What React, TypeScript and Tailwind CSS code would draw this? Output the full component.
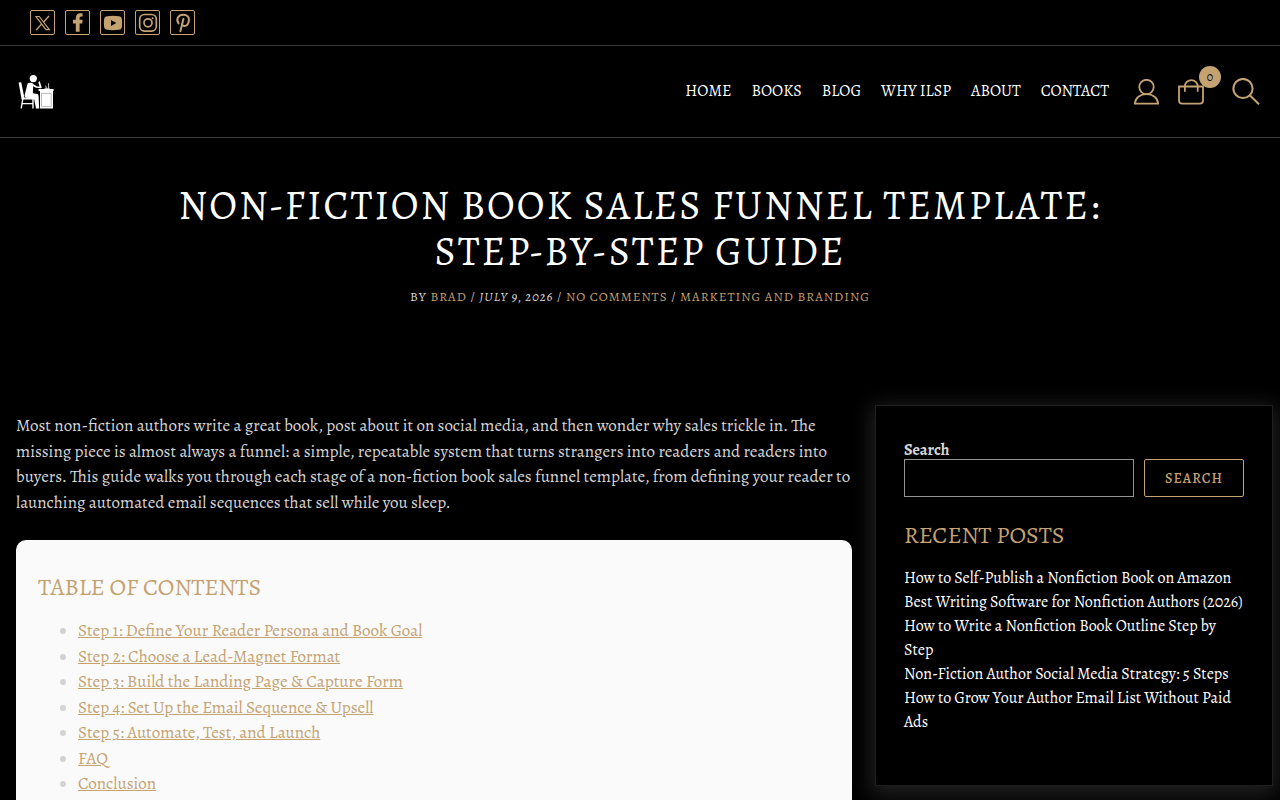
import type { ReactNode } from "react";

const socials: { name: string; icon: ReactNode }[] = [
  {
    name: "X",
    icon: (
      <svg viewBox="0 0 24 24" className="size-6 shrink-0" fill="none" stroke="currentColor">
        <path d="M5 5.500h3.300l10 13.200H15z" strokeWidth="1.200" />
        <path d="M18 5l-5.600 6.300M10.800 12.900L5.200 19" strokeWidth="1.400" />
      </svg>
    ),
  },
  {
    name: "Facebook",
    icon: (
      <svg viewBox="0 0 24 24" className="size-6 shrink-0" fill="currentColor">
        <path d="M9.800 20.800V12.500H7V8.800h2.800V6.900c0-2.900 1.700-4.600 4.300-4.600 1.200 0 2.500.2 2.500.2v3.100h-1.200c-1.300 0-1.800.8-1.800 1.700v1.500h3.100l-.5 3.700h-2.600v8.300z" />
      </svg>
    ),
  },
  {
    name: "YouTube",
    icon: (
      <svg viewBox="0 0 24 24" className="size-6 shrink-0" fill="currentColor">
        <path fillRule="evenodd" d="M6 5.200q6-.7 12 0 2.600.2 2.900 2.800.5 4 0 8-.3 2.600-2.900 2.800-6 .7-12 0-2.600-.2-2.900-2.800-.5-4 0-8Q3.400 5.400 6 5.200zM10 9v6l5.400-3z" />
      </svg>
    ),
  },
  {
    name: "Instagram",
    icon: (
      <svg viewBox="0 0 24 24" className="size-6 shrink-0" fill="none" stroke="currentColor" strokeWidth="1.700">
        <rect x="3.700" y="3.500" width="16.600" height="16.600" rx="4.800" />
        <circle cx="12" cy="11.800" r="4" />
        <circle cx="16.600" cy="7.200" r="1" fill="currentColor" stroke="none" />
      </svg>
    ),
  },
  {
    name: "Pinterest",
    icon: (
      <svg viewBox="0 0 24 24" className="size-6 shrink-0" fill="none" stroke="currentColor" strokeWidth="2" strokeLinecap="round">
        <path d="M7.600 12.400C4.600 8.400 7.200 3.700 12.200 3.700c4 0 6.200 2.500 5.700 5.900-.5 3.600-2.500 5.500-4.700 5.400-1.400-.1-2.100-.9-2.200-1.800M12.400 8L9.400 20.200" />
      </svg>
    ),
  },
];

const navItems = ["Home", "Books", "Blog", "Why ILSP", "About", "Contact"];

const contents = [
  "Step 1: Define Your Reader Persona and Book Goal",
  "Step 2: Choose a Lead-Magnet Format",
  "Step 3: Build the Landing Page & Capture Form",
  "Step 4: Set Up the Email Sequence & Upsell",
  "Step 5: Automate, Test, and Launch",
  "FAQ",
  "Conclusion",
];

const posts = [
  "How to Self-Publish a Nonfiction Book on Amazon",
  "Best Writing Software for Nonfiction Authors (2026)",
  "How to Write a Nonfiction Book Outline Step by Step",
  "Non-Fiction Author Social Media Strategy: 5 Steps",
  "How to Grow Your Author Email List Without Paid Ads",
];

function Logo() {
  return (
    <svg viewBox="0 0 36 34" className="h-[34px] w-9" fill="none" stroke="#fff" strokeLinecap="round" strokeLinejoin="round">
      <circle cx="15.3" cy="3.6" r="3.6" fill="#fff" stroke="none" />
      <path d="M0.6 7.6l2.6-.4L6.4 22.4H17v2.200H3.600z" fill="#fff" stroke="none" />
      <path d="M4.800 24L3.200 33.400M15 24v9.400M4.400 28.600h10.400" strokeWidth="1.400" strokeLinecap="butt" />
      <path d="M9.600 8.400c1.800-1.200 4.400-1 5.800.6l-.6 9.200 4.400.8c1 .4 1.400 1.200 1.400 2.200l.6 12.200h-3.200l-2-10.200-7.400-.4c-1.800-.2-2.200-1.800-1.800-3.200z" fill="#fff" stroke="none" />
      <path d="M14 9.400l4.400 2.600 4.400.4-1.600-5.200" strokeWidth="1.700" />
      <path d="M20.600 14h15v2h-15zM22 16h13v17.600H22z" fill="#fff" stroke="none" />
      <path d="M23.800 18.400h9.400v13.200h-9.400z" stroke="#a8a8a8" strokeWidth=".8" />
      <path d="M27 13.400h4.400M30.600 13V8.600M28.400 13l-.6-2" strokeWidth=".9" stroke="#ddd" />
    </svg>
  );
}

function UserIcon() {
  return (
    <svg viewBox="0 0 26 26" className="size-[26px]" fill="none" stroke="currentColor" strokeWidth="1.800">
      <circle cx="12.500" cy="8" r="7.200" />
      <path d="M.9 24.600C1.300 19 6 15.200 12.500 15.200S23.700 19 24.100 24.600z" />
    </svg>
  );
}

function BagIcon() {
  return (
    <svg viewBox="0 0 26 26" className="size-[26px]" fill="none" stroke="currentColor" strokeWidth="1.800">
      <path d="M1 7.500h24V21.500q0 3.100-3.100 3.100H4.100Q1 24.600 1 21.500z" />
      <path d="M6.900 12.800V7.500a6.200 6.200 0 0 1 12.800 0v5.300" />
    </svg>
  );
}

function SearchIcon() {
  return (
    <svg viewBox="0 0 28 28" className="size-7" fill="none" stroke="currentColor" strokeWidth="2">
      <circle cx="11" cy="10.500" r="9.600" />
      <path d="M17.800 17.300l9.200 9" />
    </svg>
  );
}

export default function App() {
  return (
    <div className="min-h-screen overflow-x-hidden bg-black font-[Alegreya,'Liberation_Serif',serif] text-[17px] leading-normal text-[#d6d6d6] oldstyle-nums">
      <div className="flex gap-[10px] border-b border-[#3a3a3a] px-[30px] py-[10px]">
        {socials.map((s) => (
          <a key={s.name} href="#" aria-label={s.name} className="flex size-[25px] items-center justify-center rounded-[2px] border border-[#c5a272] text-[#c5a272]">
            {s.icon}
          </a>
        ))}
      </div>

      <header className="flex h-[92px] items-center justify-between border-b border-[#3a3a3a] pr-5 pl-[18px]">
        <a href="#" aria-label="Home page">
          <Logo />
        </a>
        <div className="flex items-center">
          <nav className="flex gap-5 pb-0.5 text-[16px] text-white uppercase">
            {navItems.map((n) => (
              <a key={n} href="#">{n}</a>
            ))}
          </nav>
          <div className="flex items-center text-[#c5a272]">
            <a href="#" aria-label="Account" className="ml-[25px]">
              <UserIcon />
            </a>
            <a href="#" aria-label="Cart" className="relative ml-[18px]">
              <BagIcon />
              <span className="absolute -top-[13px] left-[21px] flex size-[22px] items-center justify-center rounded-full bg-[#c5a272] text-[12px] text-black">0</span>
            </a>
            <button type="button" aria-label="Open search" className="ml-7">
              <SearchIcon />
            </button>
          </div>
        </div>
      </header>

      <section className="px-4 pt-[45px] text-center uppercase">
        <h1 className="mx-auto max-w-[1000px] text-[40px] leading-[46px] tracking-[2px] text-white">
          Non-Fiction Book Sales Funnel Template: Step-by-Step Guide
        </h1>
        <p className="mt-3 text-[13px] leading-5 tracking-[1px]">
          By <a href="#" className="text-[#c5a272]">Brad</a> / <em>July 9, 2026</em> / <a href="#" className="text-[#c5a272]">No Comments</a> / <a href="#" className="text-[#c5a272]">Marketing and Branding</a>
        </p>
      </section>

      <div className="flex items-start gap-[23px] pt-[98px] pr-[7px] pl-4">
        <main className="min-w-0 flex-1 pt-2">
          <p>
            Most non-fiction authors write a great book, post about it on social media, and then wonder why sales trickle in. The missing piece is almost always a funnel: a simple, repeatable system that turns strangers into readers and readers into buyers. This guide walks you through each stage of a non-fiction book sales funnel template, from defining your reader to launching automated email sequences that sell while you sleep.
          </p>
          <div className="mt-[25px] rounded-[10px] bg-[#fafafa] px-[22px] py-7 text-[#c5a272]">
            <h2 className="text-[24px] leading-[38px] uppercase">Table of Contents</h2>
            <ul className="mt-3 list-disc pl-10 marker:text-[#d3d3d3]">
              {contents.map((c) => (
                <li key={c}>
                  <a href="#" className="underline">{c}</a>
                </li>
              ))}
            </ul>
          </div>
        </main>

        <aside className="w-[398px] shrink-0 border border-[#1f1f1f] px-7 pt-[35px] pb-[51px] shadow-[0_5px_20px_4px_rgba(255,255,255,0.13)]">
          <form>
            <label htmlFor="site-search" className="block text-[16px] leading-[18px] font-bold">Search</label>
            <div className="flex gap-[10px]">
              <input id="site-search" type="search" className="h-[38px] min-w-0 flex-1 border border-[#949494] bg-transparent px-2" />
              <button type="submit" className="h-[38px] w-[100px] rounded-[2px] border border-[#c5a272] text-[14px] font-medium tracking-[1px] text-[#c5a272] uppercase">Search</button>
            </div>
          </form>
          <h2 className="mt-[19px] text-[24px] leading-[38px] text-[#c5a272] uppercase">Recent Posts</h2>
          <ul className="mt-3 text-[16px] leading-6 text-white">
            {posts.map((p) => (
              <li key={p}>
                <a href="#">{p}</a>
              </li>
            ))}
          </ul>
        </aside>
      </div>
    </div>
  );
}
